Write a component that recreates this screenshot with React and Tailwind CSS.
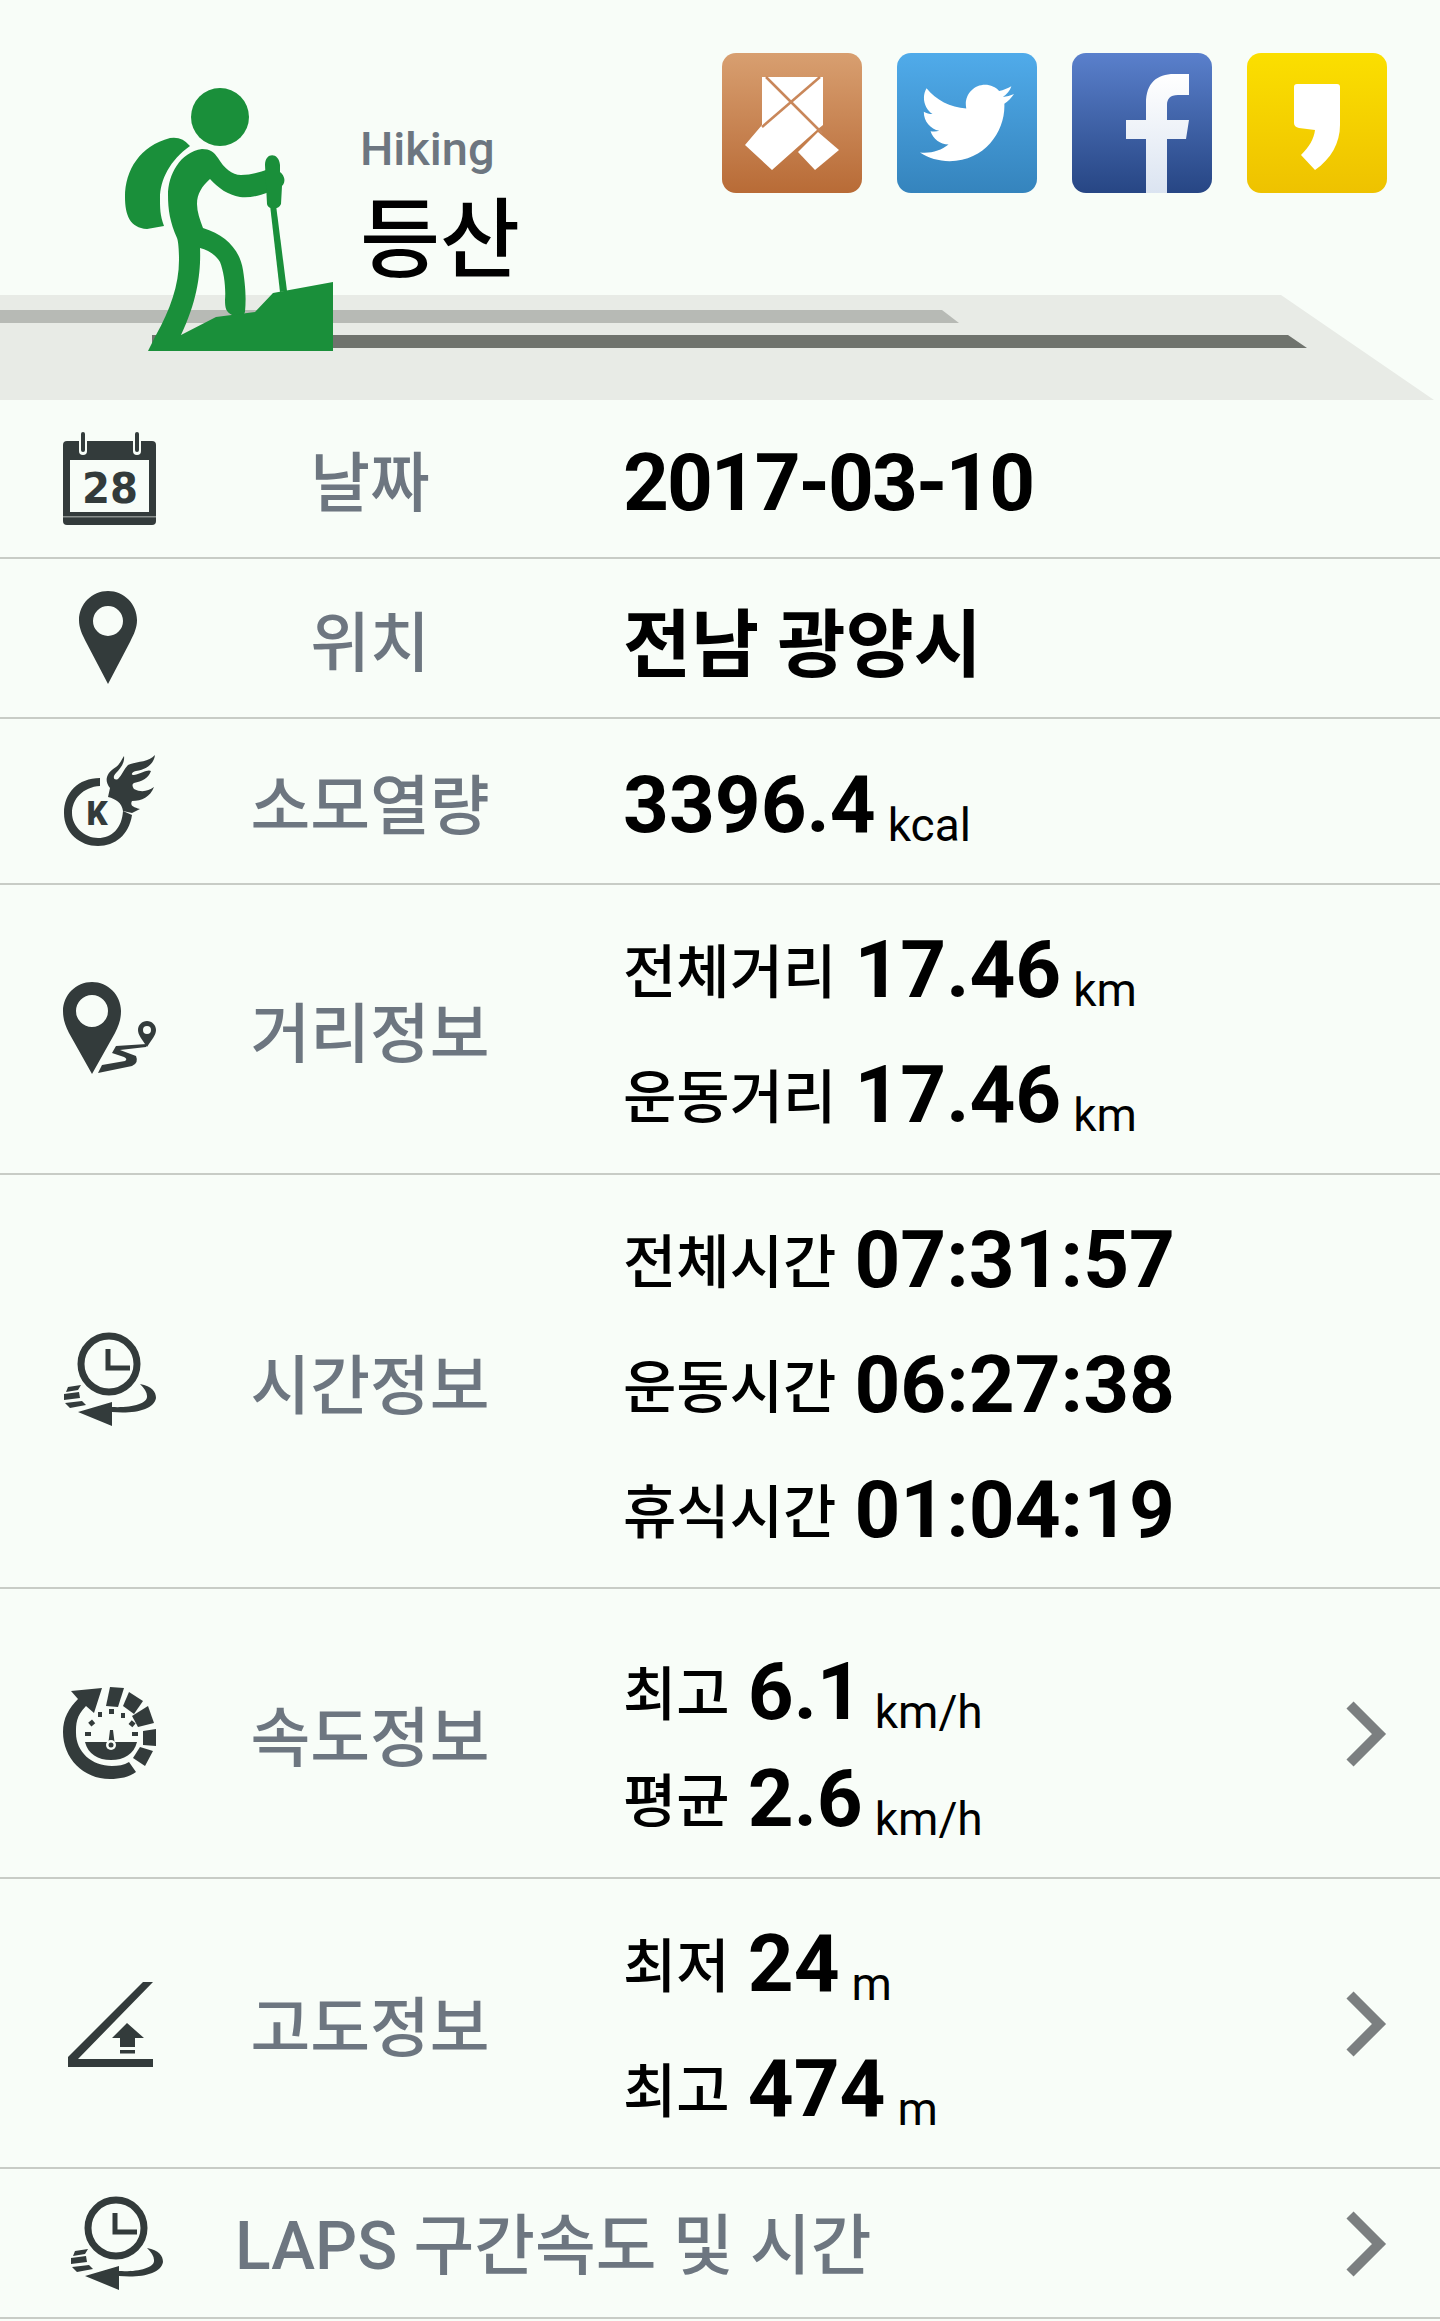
import { FaTwitter } from 'react-icons/fa';

const fontStack = "font-['Roboto','Noto_Sans_CJK_KR',sans-serif]";
const dark = '#333b3b';

// hiker drawn in page coordinates, viewBox starts at the svg's place on the page
const Hiker = () => (
  <svg viewBox="120 85 215 267" className="w-[215px] h-[267px] shrink-0" fill="#1a8f3a">
    <ellipse cx="220" cy="117" rx="29" ry="29" />
    <path d="M190 146 Q182 136 170 138 C140 146 125 170 125 197 C125 215 130 228 147 229 L164 226 C160 215 160 208 160 198 C160 180 170 160 190 146Z" />
    <path d="M202 149 C210 149 214 152 218 158 C224 168 232 175 241 175 C252 175 260 172 269 169 L269 192 C258 196 250 198 240 197 C228 195 218 188 210 179 C202 186 197 194 197 204 C197 212 200 220 203 228 C226 235 240 250 243 270 C246 290 246 300 245 312 C243 318 236 318 232 315 C226 312 225 308 225 300 C226 288 224 272 220 262 C216 255 208 250 200 248 C201 270 198 300 181 335 L156 335 C170 310 179 285 179 260 C179 248 178 240 177 238 C170 222 168 210 168 195 C168 175 180 152 202 149Z" />
    <path d="M148 351 H333 V282 L273 293 L255 312 L216 317 L181 335 L156 335Z" />
    <path d="M270 205 H276 L287 291 L280 292Z" />
    <path d="M265 165 C265 152 279 152 280 165 L280 172 C285 176 286 182 282 186 L281 204 C279 210 268 210 267 204Z" />
  </svg>
);

const Band = () => (
  <svg viewBox="0 295 1440 105" className="absolute left-0 bottom-0 w-full h-[105px]">
    <polygon points="0,295 1281,295 1434,400 0,400" fill="#e8ebe6" />
    <polygon points="0,310 942,310 959,323 0,323" fill="#b7bab5" />
    <polygon points="152,335 1288,335 1307,348 152,348" fill="#6f736d" />
  </svg>
);

const Copper = () => (
  <div className="w-[140px] h-[140px] rounded-[14px] bg-gradient-to-b from-[#d89f70] to-[#b86b36]">
    <svg viewBox="0 0 140 140" className="w-full h-full">
      <polygon points="40,24 101,24 101,72 96,76 50,117 23,92 40,72" fill="#fff" />
      <polygon points="96,79 117,97 93,117 76,99" fill="#fff" />
      <g stroke="#c9875a" strokeWidth="2.5">
        <line x1="44" y1="24" x2="100" y2="80" />
        <line x1="98" y1="24" x2="40" y2="74" />
      </g>
    </svg>
  </div>
);

const Twitter = () => (
  <div className="w-[140px] h-[140px] rounded-[14px] bg-gradient-to-b from-[#50abea] to-[#3584bd] flex items-center justify-center">
    <FaTwitter size={94} color="#fff" />
  </div>
);

const Facebook = () => (
  <div className="w-[140px] h-[140px] rounded-[14px] bg-gradient-to-b from-[#5a80cc] to-[#274684]">
    <svg viewBox="0 0 140 140" className="w-full h-full">
      <defs>
        <linearGradient id="fbF" x1="0" y1="0" x2="0" y2="1">
          <stop offset="0" stopColor="#ffffff" />
          <stop offset="1" stopColor="#dbe4f1" />
        </linearGradient>
      </defs>
      <path
        d="M74 140V86H54V67H74V50C74 30 85 21 102 21H117V42H106C98 42 95 46 95 52V67H117L114 86H95V140Z"
        fill="url(#fbF)"
      />
    </svg>
  </div>
);

const Kakao = () => (
  <div className="w-[140px] h-[140px] rounded-[14px] bg-gradient-to-b from-[#fbdf00] to-[#eec200]">
    <svg viewBox="0 0 140 140" className="w-full h-full">
      <path
        d="M50 31H90Q93 31 93 34V72C93 90 84 106 68 117L54 102C62 94 67 86 68 77L52 75Q47 74 47 70V34Q47 31 50 31Z"
        fill="#fff"
      />
    </svg>
  </div>
);

const CalendarIcon = () => (
  <svg viewBox="0 0 140 140" className="w-[140px] h-[140px]" fill={dark}>
    <path d="M27 32 H112 Q116 32 116 36 V112 Q116 116 112 116 H27 Q23 116 23 112 V36 Q23 32 27 32Z" />
    <rect x="30" y="51" width="79" height="52" fill="#f8fdf8" />
    <rect x="23" y="107" width="93" height="1.5" fill="#8a908d" />
    <rect x="39" y="23" width="8" height="23" rx="4" fill="#f8fdf8" />
    <rect x="93" y="23" width="8" height="23" rx="4" fill="#f8fdf8" />
    <rect x="41" y="23" width="4" height="20" rx="2" />
    <rect x="95" y="23" width="4" height="20" rx="2" />
    <text x="70" y="94" textAnchor="middle" fontFamily="DejaVu Sans" fontWeight="700" fontSize="42" textLength="56" lengthAdjust="spacingAndGlyphs">28</text>
  </svg>
);

const PinIcon = () => (
  <svg viewBox="0 0 140 140" className="w-[140px] h-[140px]">
    <path
      fillRule="evenodd"
      d="M68 23 C84 23 97 36 97 52 C97 60 94 66 90 74 L68 116 L46 74 C42 66 39 60 39 52 C39 36 52 23 68 23Z M68 38 A15 15 0 1 0 68 68 A15 15 0 1 0 68 38Z"
      fill={dark}
    />
  </svg>
);

const KcalIcon = () => (
  <svg viewBox="0 0 140 140" className="w-[140px] h-[140px]" fill={dark}>
    <path d="M60 47 C38 47 24 62 24 82 C24 102 40 115 58 115 C75 115 89 104 92 84 L83 80 C82 97 72 107 58 107 C45 107 32 96 32 82 C32 68 43 56 60 55Z" />
    <path d="M70 57 C64 50 66 42 76 36 C80 33 82 28 84 25 C85 32 80 38 76 42 C72 46 74 50 78 48 C82 44 84 38 88 34 C96 30 108 32 115 24 C114 32 108 38 96 40 C92 41 90 44 94 44 C102 42 108 38 111 40 C108 48 102 50 94 52 C92 53 92 55 94 58 C102 62 108 60 114 56 C110 66 102 70 92 70 C90 74 92 76 100 78 L92 82 L83 80 C82 72 76 68 68 66Z" />
    <text x="57" y="94" textAnchor="middle" fontFamily="Roboto" fontWeight="900" fontSize="33">K</text>
  </svg>
);

const RouteIcon = () => (
  <svg viewBox="0 0 140 140" className="w-[140px] h-[140px]" fill={dark}>
    <path
      fillRule="evenodd"
      d="M52 23 C68 23 81 36 81 52 C81 60 79 66 75 74 L52 115 L29 74 C25 66 23 60 23 52 C23 36 36 23 52 23Z M52 36 A16 16 0 1 0 52 68 A16 16 0 1 0 52 36Z"
    />
    <path
      fillRule="evenodd"
      d="M107 62 C112 62 116 66 116 71 C116 76 112 80 107 88 C102 80 98 76 98 71 C98 66 102 62 107 62Z M107 67 A4 4 0 1 0 107 75 A4 4 0 1 0 107 67Z"
    />
    <path d="M107 85 L106 88 L80 91 L96 97 Q99 104 92 107 L58 114 L62 106 L85 102 Q88 100 84 98 L72 94 L76 87Z" />
  </svg>
);

const ClockIcon = ({ offset = -9, dx = 0 }) => (
  <svg viewBox={`${-dx} ${offset} 140 140`} className="w-[140px] h-[140px]" fill={dark}>
    <circle cx="69" cy="44" r="28" fill="none" stroke={dark} strokeWidth="7" />
    <path d="M68 29 V48 H90" fill="none" stroke={dark} strokeWidth="5" />
    <path d="M100 64 C112 66 116 72 116 78 C114 90 94 94 72 92 L72 106 L38 92 L72 82 L72 87 C90 88 108 84 107 76 C107 72 104 68 100 64Z" />
    <path d="M28 67 L41 65 L38 70 L26 72Z M24 74 L39 72 L40 78 L24 80Z M25 83 L42 81 L46 85 L30 88Z" />
  </svg>
);

const SpeedIcon = () => (
  <svg viewBox="0 3 140 140" className="w-[140px] h-[140px]" fill={dark}>
    <path d="M31 31 L62 28 L54 53 L46 46 C36 56 36 64 36 73 C36 92 52 106 72 106 C78 106 84 105 89 102 L96 112 C89 117 80 119 70 119 C43 119 23 98 23 72 C23 58 29 48 38 39Z" />
    <polygon points="70,27 84,28 78,47 66,46" />
    <polygon points="89,32 103,41 94,54 83,46" />
    <polygon points="108,46 114,63 98,67 92,56" />
    <polygon points="116,69 116,86 103,85 103,71" />
    <polygon points="113,91 105,106 93,98 100,87" />
    <path d="M45 82 H97 C94 94 84 100 71 100 C58 100 48 94 45 82Z" />
    <polygon points="70,70 73,70 75,86 68,86" />
    <circle cx="71" cy="85" r="5" fill="#f8fdf8" />
    <circle cx="71" cy="85" r="2.5" />
    <g>
      <rect x="45" y="72" width="6" height="4" />
      <rect x="49" y="61" width="5" height="5" transform="rotate(-40 51 63)" />
      <rect x="58" y="52" width="4" height="5" />
      <rect x="69" y="49" width="5" height="5" />
      <rect x="81" y="53" width="4" height="5" />
      <rect x="90" y="61" width="5" height="5" transform="rotate(40 92 63)" />
      <rect x="92" y="72" width="6" height="4" />
    </g>
  </svg>
);

const AltitudeIcon = () => (
  <svg viewBox="0 3 140 140" className="w-[140px] h-[140px]" fill={dark}>
    <path d="M103 32 H113 L38 109 H113 V117 H28 V107Z" />
    <path d="M87 73 L104 88 H95 V97 H80 V88 H72Z" />
    <rect x="80" y="100" width="15" height="3.5" />
  </svg>
);

const Chevron = () => (
  <svg viewBox="0 0 140 140" className="w-[140px] h-[140px]">
    <path d="M50 42 L79 71 L50 100" fill="none" stroke="#7b7f80" strokeWidth="10" />
  </svg>
);

const Num = ({ children }) => <span className="text-[80px] font-bold">{children}</span>;
const Unit = ({ children }) => <span className="text-[46px] ml-3 translate-y-[9px]">{children}</span>;

const Line = ({ title, value, unit, h = 'h-[125px]' }) => (
  <div className={`${h} flex items-baseline leading-[125px]`}>
    <span className="text-[58px] font-medium -translate-y-1">{title}</span>
    <span className="ml-[18px]">
      <Num>{value}</Num>
    </span>
    {unit && <Unit>{unit}</Unit>}
  </div>
);

const Row = ({ icon, label, height, chevron, children }) => (
  <div className={`${height} flex items-center border-b-2 border-[#c8ccc6]`}>
    <div className="w-[140px] ml-[40px] shrink-0">{icon}</div>
    <div className="w-[300px] ml-[40px] pt-3 text-center text-[65px] font-medium text-[#6d7680] shrink-0 leading-none">{label}</div>
    <div className="ml-[105px] pt-2 -translate-x-[2px] text-black">{children}</div>
    {chevron && (
      <div className="ml-auto w-[140px] shrink-0">
        <Chevron />
      </div>
    )}
  </div>
);

export default function App() {
  return (
    <div className={`w-[1440px] h-[2321px] bg-[#f8fdf8] overflow-hidden ${fontStack}`}>
      <header className="relative h-[400px]">
        <Band />
        <div className="relative flex items-start pl-[120px] pt-[85px]">
          <Hiker />
          <div className="ml-[25px] pt-[36px]">
            <div className="text-[47px] font-medium text-[#6d7680] leading-[56px]">Hiking</div>
            <div className="mt-[14px] text-[87px] font-medium text-black leading-[100px]">등산</div>
          </div>
          <div className="ml-auto mr-[53px] -mt-[32px] flex gap-[35px]">
            <Copper />
            <Twitter />
            <Facebook />
            <Kakao />
          </div>
        </div>
      </header>

      <Row height="h-[159px]" icon={<CalendarIcon />} label="날짜">
        <span className="text-[80px] font-bold tracking-[-2px]">2017-03-10</span>
      </Row>
      <Row height="h-[160px]" icon={<PinIcon />} label="위치">
        <span className="inline-block text-[74px] font-bold translate-y-[3px]">전남 광양시</span>
      </Row>
      <Row height="h-[166px]" icon={<KcalIcon />} label="소모열량">
        <div className="flex items-baseline">
          <Num>3396.4</Num>
          <Unit>kcal</Unit>
        </div>
      </Row>
      <Row height="h-[290px]" icon={<RouteIcon />} label="거리정보">
        <Line title="전체거리" value="17.46" unit="km" />
        <Line title="운동거리" value="17.46" unit="km" />
      </Row>
      <Row height="h-[414px]" icon={<ClockIcon />} label="시간정보">
        <Line title="전체시간" value="07:31:57" />
        <Line title="운동시간" value="06:27:38" />
        <Line title="휴식시간" value="01:04:19" />
      </Row>
      <Row height="h-[290px]" icon={<SpeedIcon />} label="속도정보" chevron>
        <Line title="최고" value="6.1" unit="km/h" h="h-[107px]" />
        <Line title="평균" value="2.6" unit="km/h" h="h-[107px]" />
      </Row>
      <Row height="h-[290px]" icon={<AltitudeIcon />} label="고도정보" chevron>
        <Line title="최저" value="24" unit="m" />
        <Line title="최고" value="474" unit="m" />
      </Row>
      <div className="h-[150px] flex items-center border-b-2 border-[#c8ccc6]">
        <div className="w-[140px] ml-[40px] shrink-0">
          <ClockIcon offset={-11} dx={7} />
        </div>
        <div className="ml-[55px] pt-2 text-[66px] font-medium text-[#6d7680] leading-none">LAPS 구간속도 및 시간</div>
        <div className="ml-auto w-[140px] shrink-0">
          <Chevron />
        </div>
      </div>
    </div>
  );
}
